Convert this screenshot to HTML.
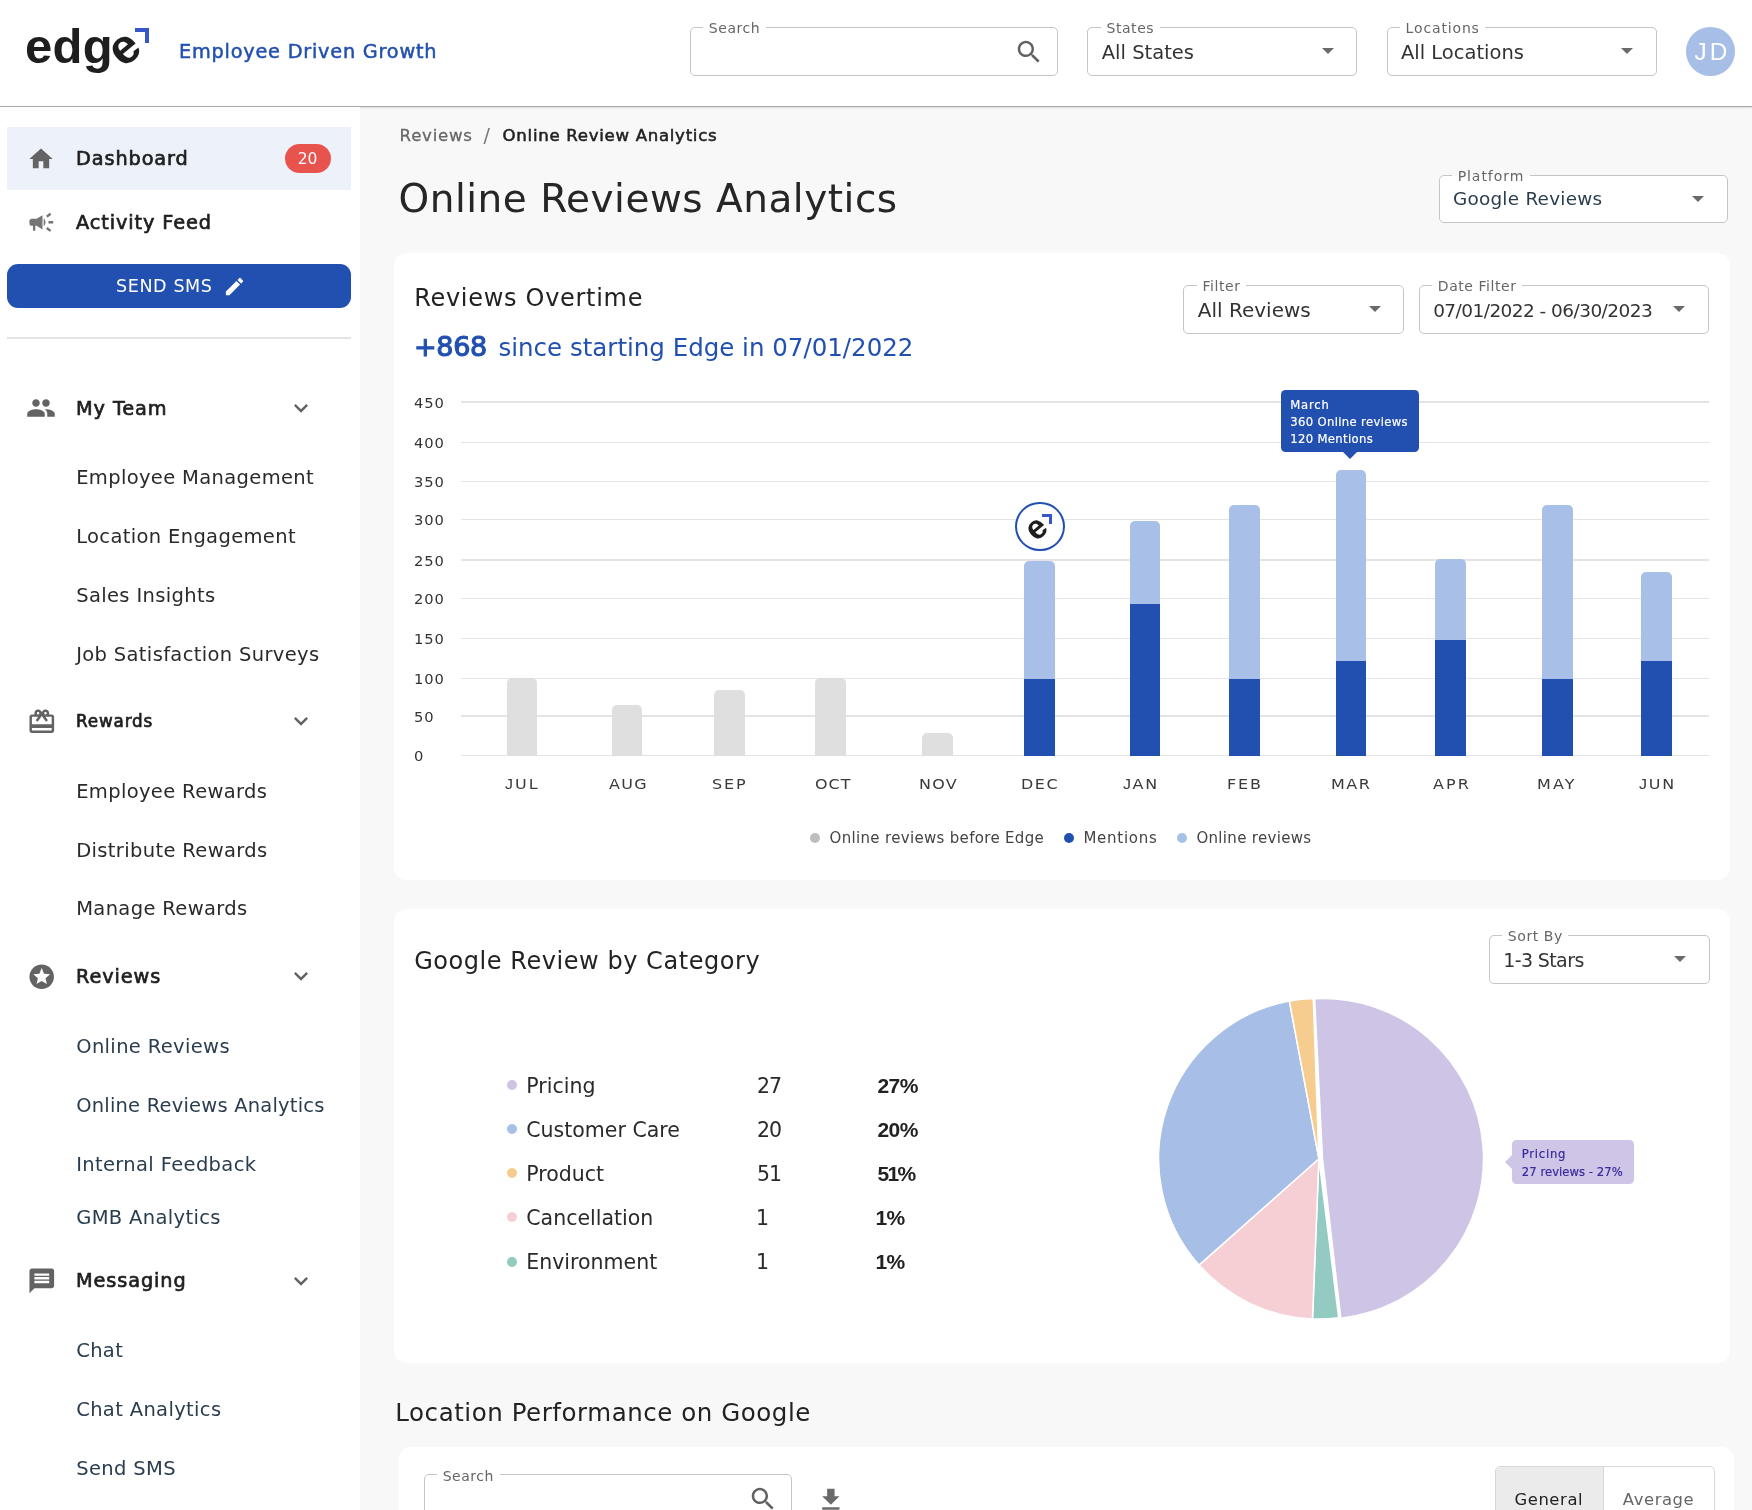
<!DOCTYPE html>
<html lang="en">
<head>
<meta charset="utf-8">
<title>Online Reviews Analytics</title>
<style>
*{box-sizing:border-box;margin:0;padding:0}
html,body{width:1752px;height:1510px;overflow:hidden;background:#f8f8f8}
body{font-family:"DejaVu Sans","Liberation Sans",sans-serif;color:#222;position:relative;-webkit-font-smoothing:antialiased}
.abs,.t,.sb,.sub{position:absolute}
.t,.sb,.sub{white-space:nowrap;line-height:1}
svg{position:absolute;display:block}
#wrap{position:absolute;left:0;top:0;width:1752px;height:1510px;will-change:transform}
#header{position:absolute;left:0;top:0;width:1752px;height:106px;background:#fff}
#hline{position:absolute;left:0;top:105.5px;width:1752px;height:1.5px;background:#a9a9a9;box-shadow:0 1px 2px rgba(0,0,0,.18)}
#sidebar{position:absolute;left:0;top:107px;width:360px;height:1403px;background:#fff}
.field{position:absolute;border:1.3px solid #c5c5c5;border-radius:5px;background:#fff}
.field .lb{position:absolute;top:-7.75px;left:12.6px;padding:0 5.5px;font-size:14px;letter-spacing:.55px;line-height:16px;color:#666;background:#fff;white-space:nowrap}
.field .val{position:absolute;left:13.4px;white-space:nowrap;color:#333;line-height:1}
.field .arr{position:absolute;width:0;height:0;border-left:6px solid transparent;border-right:6px solid transparent;border-top:6.2px solid #6a6a6a}
.sb{left:76px;font-size:19.3px;color:#1f1f1f;-webkit-text-stroke:.7px #1f1f1f;letter-spacing:.9px}
.sub{left:76.2px;font-size:19.5px;color:#2a2a2a;letter-spacing:.35px}
.sub.bl{color:#2a3d4f}
.card{position:absolute;background:#fff;border-radius:12.5px}
.gl{left:461.1px;width:1247.6px;height:1.3px;background:#e4e4e4}
.yl{left:414px;font-size:14.7px;color:#333;letter-spacing:.95px}
.bar{}.bar.g{background:#dfdfdf;border-radius:5px 5px 0 0}.bar.l{background:#a8c0e8;border-radius:5px 5px 0 0}.bar.d{background:#2250b0}
.xl{top:777.2px;font-size:14px;color:#3a3a3a;transform:scaleX(1.14);transform-origin:0 0}
.tt{font-size:11.6px;color:#fff;-webkit-text-stroke:.2px #fff;letter-spacing:.36px}
.dot{width:10px;height:10px;border-radius:50%}
.lg{font-size:15px;color:#444;letter-spacing:.32px}
.ct{font-size:20.5px;color:#2a2a2a}
.ct.b{font-family:'Liberation Sans',sans-serif;font-weight:bold;font-size:21px;letter-spacing:-.6px;color:#222}
.pt{font-size:11.6px;color:#3a2a9c;-webkit-text-stroke:.2px #3a2a9c;letter-spacing:.3px}
</style>
</head>
<body>
<div id="wrap">
<!-- HEADER -->
<div id="header">
  <div class="t" id="logo" style="left:25px;top:22px;font-family:'Liberation Sans',sans-serif;font-weight:bold;font-size:49px;letter-spacing:.3px;color:#1e1e1e">edg<span id="loge" style="display:inline-block;transform:translate(.5px,-.5px) rotate(-40deg);transform-origin:50% 62%">e</span></div>
  <div class="abs" style="left:134.5px;top:28.2px;width:14.4px;height:14.6px;border-top:4.6px solid #3756c8;border-right:4.5px solid #3756c8"></div>
  <div class="t" style="left:179px;top:42.2px;font-size:19.3px;color:#2250b0;-webkit-text-stroke:.5px #2250b0;letter-spacing:.78px">Employee Driven Growth</div>

  <div class="field" style="left:689.7px;top:27.05px;width:368.4px;height:49.2px"><span class="lb">Search</span><svg viewBox="0 0 24 24" style="left:323.4px;top:8.8px;width:30px;height:30px" fill="#616161"><path d="M15.5 14h-.79l-.28-.27C15.41 12.59 16 11.11 16 9.5 16 5.91 13.09 3 9.5 3S3 5.91 3 9.5 5.91 16 9.5 16c1.61 0 3.09-.59 4.23-1.57l.27.28v.79l5 4.99L20.49 19l-4.99-5zm-6 0C7.01 14 5 11.99 5 9.5S7.01 5 9.5 5 14 7.01 14 9.5 11.99 14 9.5 14z"/></svg></div>
  <div class="field" style="left:1087.4px;top:27.05px;width:270px;height:49.2px"><span class="lb">States</span><span class="val" style="top:15.4px;font-size:19.5px">All States</span><span class="arr" style="left:233.2px;top:20.4px"></span></div>
  <div class="field" style="left:1386.5px;top:27.05px;width:270px;height:49.2px"><span class="lb" style="letter-spacing:.85px">Locations</span><span class="val" style="top:15.4px;font-size:19.5px">All Locations</span><span class="arr" style="left:233.6px;top:20.4px"></span></div>
  <div class="abs" style="left:1686px;top:27.2px;width:49.2px;height:48.6px;border-radius:50%;background:#a7bfe6"></div>
  <div class="t" style="left:1694.5px;top:39.8px;font-family:'Liberation Sans',sans-serif;font-size:24.3px;color:#fff;letter-spacing:3px">JD</div>
</div>
<div id="hline"></div>

<!-- SIDEBAR -->
<div id="sidebar"></div>
<div class="abs" style="left:7px;top:126.7px;width:343.6px;height:63.2px;background:#edf1f9"></div>
<svg viewBox="0 0 24 24" style="left:27.3px;top:144.6px;width:28px;height:28px" fill="#636363"><path d="M10 20v-6h4v6h5v-8h3L12 3 2 12h3v8z"/></svg>
<div class="sb" style="top:149px">Dashboard</div>
<div class="abs" style="left:285.4px;top:144px;width:45.7px;height:29.3px;border-radius:15px;background:#e9534e"></div>
<div class="t" style="left:284.5px;top:151.6px;width:46px;text-align:center;font-size:15.5px;color:#fff">20</div>
<svg viewBox="0 0 24 24" style="left:26.5px;top:208.1px;width:28.6px;height:28.6px" fill="#757575"><path d="M18 11v2h4v-2h-4zm-2 6.61c.96.71 2.21 1.65 3.2 2.39.4-.53.8-1.07 1.2-1.6-.99-.74-2.24-1.68-3.2-2.4-.4.54-.8 1.08-1.2 1.61zM20.4 5.6c-.4-.53-.8-1.07-1.2-1.6-.99.74-2.24 1.68-3.2 2.4.4.53.8 1.07 1.2 1.6.96-.72 2.21-1.65 3.2-2.4zM4 9c-1.1 0-2 .9-2 2v2c0 1.1.9 2 2 2h1v4h2v-4h1l5 3V6L8 9H4zm11.5 3c0-1.33-.58-2.53-1.5-3.35v6.69c.92-.81 1.5-2.01 1.5-3.34z"/></svg>
<div class="sb" style="top:213.2px">Activity Feed</div>
<div class="abs" style="left:7px;top:264px;width:343.6px;height:44px;border-radius:11px;background:#2250b0"></div>
<div class="t" style="left:116px;top:277.9px;font-size:17.5px;color:#fff;letter-spacing:.62px">SEND SMS</div>
<svg viewBox="0 0 24 24" style="left:223px;top:275px;width:23px;height:23px" fill="#fff"><path d="M3 17.25V21h3.75L17.81 9.94l-3.75-3.75L3 17.25zM20.71 7.04c.39-.39.39-1.02 0-1.41l-2.34-2.34c-.39-.39-1.02-.39-1.41 0l-1.83 1.83 3.75 3.75 1.83-1.83z"/></svg>
<div class="abs" style="left:7px;top:337.4px;width:343.6px;height:1.5px;background:#e4e4e4"></div>
<svg viewBox="0 0 24 24" style="left:26.3px;top:392.5px;width:30px;height:30px" fill="#636363"><path d="M16 11c1.66 0 2.99-1.34 2.99-3S17.66 5 16 5c-1.66 0-3 1.34-3 3s1.34 3 3 3zm-8 0c1.66 0 2.99-1.34 2.99-3S9.66 5 8 5C6.34 5 5 6.34 5 8s1.34 3 3 3zm0 2c-2.33 0-7 1.17-7 3.5V19h14v-2.5c0-2.33-4.67-3.5-7-3.5zm8 0c-.29 0-.62.02-.97.05 1.16.84 1.97 1.97 1.97 3.45V19h6v-2.5c0-2.33-4.67-3.5-7-3.5z"/></svg>
<div class="sb" style="top:398.9px">My Team</div>
<svg viewBox="0 0 24 24" style="left:287.3px;top:393.5px;width:28px;height:28px" fill="#636363"><path d="M16.59 8.59L12 13.17 7.41 8.59 6 10l6 6 6-6z"/></svg>
<div class="sub" style="top:467.9px">Employee Management</div>
<div class="sub" style="top:526.9px">Location Engagement</div>
<div class="sub" style="top:585.9px">Sales Insights</div>
<div class="sub" style="top:644.9px">Job Satisfaction Surveys</div>
<svg viewBox="0 0 24 24" style="left:26.6px;top:706.7px;width:29.6px;height:29.6px" fill="#636363"><path d="M20 6h-2.18c.11-.31.18-.65.18-1 0-1.66-1.34-3-3-3-1.05 0-1.96.54-2.5 1.35l-.5.67-.5-.68C10.96 2.54 10.05 2 9 2 7.34 2 6 3.34 6 5c0 .35.07.69.18 1H4c-1.11 0-1.99.89-1.99 2L2 19c0 1.11.89 2 2 2h16c1.11 0 2-.89 2-2V8c0-1.11-.89-2-2-2zm-5-2c.55 0 1 .45 1 1s-.45 1-1 1-1-.45-1-1 .45-1 1-1zM9 4c.55 0 1 .45 1 1s-.45 1-1 1-1-.45-1-1 .45-1 1-1zm11 15H4v-2h16v2zm0-5H4V8h5.08L7 10.83 8.62 12 11 8.76l1-1.36 1 1.36L15.38 12 17 10.83 14.92 8H20v6z"/></svg>
<div class="sb" style="top:712.8px;font-size:16.8px;letter-spacing:.85px">Rewards</div>
<svg viewBox="0 0 24 24" style="left:287.3px;top:707.25px;width:28px;height:28px" fill="#636363"><path d="M16.59 8.59L12 13.17 7.41 8.59 6 10l6 6 6-6z"/></svg>
<div class="sub" style="top:782.1px">Employee Rewards</div>
<div class="sub" style="top:841.0px">Distribute Rewards</div>
<div class="sub" style="top:898.9px">Manage Rewards</div>
<svg viewBox="0 0 24 24" style="left:26.65px;top:962.15px;width:29.4px;height:29.4px" fill="#636363"><path d="M11.99 2C6.47 2 2 6.48 2 12s4.47 10 9.99 10C17.52 22 22 17.52 22 12S17.52 2 11.99 2zm4.24 16L12 15.45 7.77 18l1.12-4.81-3.73-3.23 4.92-.42L12 5l1.92 4.53 4.92.42-3.73 3.23L16.23 18z"/></svg>
<div class="sb" style="top:966.6px">Reviews</div>
<svg viewBox="0 0 24 24" style="left:287.3px;top:962.35px;width:28px;height:28px" fill="#636363"><path d="M16.59 8.59L12 13.17 7.41 8.59 6 10l6 6 6-6z"/></svg>
<div class="sub bl" style="top:1036.95px">Online Reviews</div>
<div class="sub bl" style="top:1096.0px;letter-spacing:.2px">Online Reviews Analytics</div>
<div class="sub bl" style="top:1154.9px">Internal Feedback</div>
<div class="sub bl" style="top:1207.7px">GMB Analytics</div>
<svg viewBox="0 0 24 24" style="left:26.6px;top:1266.1px;width:29.6px;height:29.6px" fill="#636363"><path d="M20 2H4c-1.1 0-1.99.9-1.99 2L2 22l4-4h14c1.1 0 2-.9 2-2V4c0-1.1-.9-2-2-2zm-2 12H6v-2h12v2zm0-3H6V9h12v2zm0-3H6V6h12v2z"/></svg>
<div class="sb" style="top:1270.8px">Messaging</div>
<svg viewBox="0 0 24 24" style="left:287.3px;top:1266.65px;width:28px;height:28px" fill="#636363"><path d="M16.59 8.59L12 13.17 7.41 8.59 6 10l6 6 6-6z"/></svg>
<div class="sub bl" style="top:1340.7px">Chat</div>
<div class="sub bl" style="top:1399.6px">Chat Analytics</div>
<div class="sub bl" style="top:1458.9px">Send SMS</div>

<!-- MAIN -->
<!--M1-->
<div class="t" style="left:399.6px;top:127.7px;font-size:16.6px;color:#666;-webkit-text-stroke:.3px #666;letter-spacing:.75px">Reviews</div>
<div class="t" style="left:483.5px;top:126px;font-size:19px;color:#777">/</div>
<div class="t" style="left:502.6px;top:127.7px;font-size:16.6px;color:#222;-webkit-text-stroke:.55px #222;letter-spacing:.7px">Online Review Analytics</div>
<div class="t" style="left:398.5px;top:178.9px;font-size:39px;color:#262626;letter-spacing:.5px">Online Reviews Analytics</div>
<div class="field" style="left:1438.55px;top:175px;width:289.9px;height:48.4px"><span class="lb" style="letter-spacing:.95px;background:linear-gradient(#f8f8f8 0,#f8f8f8 7.7px,#fff 7.7px)">Platform</span><span class="val" style="top:13.5px;font-size:18.4px;letter-spacing:0.25px;color:#2a3d4f">Google Reviews</span><span class="arr" style="left:252.5px;top:20.4px"></span></div>
<div class="card" style="left:394.4px;top:252.8px;width:1335.2px;height:627.2px"></div>
<div class="t" style="left:414.2px;top:285.9px;font-size:24px;color:#222;letter-spacing:.7px">Reviews Overtime</div>
<div class="t" style="left:414px;top:333.3px;font-size:27px;color:#2250b0;-webkit-text-stroke:1.1px #2250b0;letter-spacing:-.3px">+868</div>
<div class="t" style="left:498.5px;top:336.4px;font-size:24.5px;color:#2250b0">since starting Edge in 07/01/2022</div>
<div class="field" style="left:1183.4px;top:284.6px;width:221px;height:49.5px"><span class="lb">Filter</span><span class="val" style="top:14.4px;font-size:20px">All Reviews</span><span class="arr" style="left:184.3px;top:20.4px"></span></div>
<div class="field" style="left:1418.75px;top:284.6px;width:290px;height:49.5px"><span class="lb">Date Filter</span><span class="val" style="top:16.6px;font-size:18.5px;letter-spacing:-0.55px">07/01/2022 - 06/30/2023</span><span class="arr" style="left:253.2px;top:20.4px"></span></div>
<div class="abs gl" style="top:401.25px"></div>
<div class="t yl" style="top:395.55px">450</div>
<div class="abs gl" style="top:441.65px"></div>
<div class="t yl" style="top:435.95px">400</div>
<div class="abs gl" style="top:481.05px"></div>
<div class="t yl" style="top:475.35px">350</div>
<div class="abs gl" style="top:519.15px"></div>
<div class="t yl" style="top:513.45px">300</div>
<div class="abs gl" style="top:559.45px"></div>
<div class="t yl" style="top:553.75px">250</div>
<div class="abs gl" style="top:597.55px"></div>
<div class="t yl" style="top:591.85px">200</div>
<div class="abs gl" style="top:637.75px"></div>
<div class="t yl" style="top:632.05px">150</div>
<div class="abs gl" style="top:677.65px"></div>
<div class="t yl" style="top:671.95px">100</div>
<div class="abs gl" style="top:715.25px"></div>
<div class="t yl" style="top:709.55px">50</div>
<div class="abs gl" style="top:754.85px"></div>
<div class="t yl" style="top:749.15px">0</div>
<div class="abs bar g" style="left:506.5px;width:30.3px;top:678.2px;height:77.4px"></div>
<div class="abs bar g" style="left:612.2px;width:30.2px;top:704.5px;height:51.1px"></div>
<div class="abs bar g" style="left:714px;width:30.5px;top:690px;height:65.6px"></div>
<div class="abs bar g" style="left:815.4px;width:30.9px;top:678.3px;height:77.3px"></div>
<div class="abs bar g" style="left:922.3px;width:30.7px;top:733px;height:22.6px"></div>
<div class="abs bar l" style="left:1024px;width:30.8px;top:561.1px;height:194.5px"></div>
<div class="abs bar d" style="left:1024px;width:30.8px;top:678.7px;height:76.9px"></div>
<div class="abs bar l" style="left:1129.7px;width:30.6px;top:520.5px;height:235.1px"></div>
<div class="abs bar d" style="left:1129.7px;width:30.6px;top:603.8px;height:151.8px"></div>
<div class="abs bar l" style="left:1229px;width:30.8px;top:504.5px;height:251.1px"></div>
<div class="abs bar d" style="left:1229px;width:30.8px;top:678.7px;height:76.9px"></div>
<div class="abs bar l" style="left:1335.6px;width:30.8px;top:470.3px;height:285.3px"></div>
<div class="abs bar d" style="left:1335.6px;width:30.8px;top:661.4px;height:94.2px"></div>
<div class="abs bar l" style="left:1435.2px;width:30.6px;top:558.6px;height:197.0px"></div>
<div class="abs bar d" style="left:1435.2px;width:30.6px;top:639.7px;height:115.9px"></div>
<div class="abs bar l" style="left:1541.8px;width:30.8px;top:504.5px;height:251.1px"></div>
<div class="abs bar d" style="left:1541.8px;width:30.8px;top:678.7px;height:76.9px"></div>
<div class="abs bar l" style="left:1641.1px;width:30.9px;top:572.1px;height:183.5px"></div>
<div class="abs bar d" style="left:1641.1px;width:30.9px;top:661.4px;height:94.2px"></div>
<div class="t xl" style="left:505.1px;letter-spacing:1.84px"><span style="font-family:'Liberation Sans',sans-serif">J</span>UL</div>
<div class="t xl" style="left:608.9px;letter-spacing:1.17px">AUG</div>
<div class="t xl" style="left:711.9px;letter-spacing:1.66px">SEP</div>
<div class="t xl" style="left:814.8px;letter-spacing:0.91px">OCT</div>
<div class="t xl" style="left:918.5px;letter-spacing:1.10px">NOV</div>
<div class="t xl" style="left:1021.1px;letter-spacing:1.33px">DEC</div>
<div class="t xl" style="left:1123.4px;letter-spacing:1.41px"><span style="font-family:'Liberation Sans',sans-serif">J</span>AN</div>
<div class="t xl" style="left:1227.3px;letter-spacing:1.68px">FEB</div>
<div class="t xl" style="left:1330.5px;letter-spacing:1.35px">MAR</div>
<div class="t xl" style="left:1433.1px;letter-spacing:1.85px">APR</div>
<div class="t xl" style="left:1536.5px;letter-spacing:1.86px">MAY</div>
<div class="t xl" style="left:1638.8px;letter-spacing:1.55px"><span style="font-family:'Liberation Sans',sans-serif">J</span>UN</div>
<div class="abs" style="left:1280.5px;top:390px;width:138.8px;height:61.7px;border-radius:4.5px;background:#2250b0"></div>
<div class="abs" style="left:1342.7px;top:451.5px;width:0;height:0;border-left:7.2px solid transparent;border-right:7.2px solid transparent;border-top:7.4px solid #2250b0"></div>
<div class="t tt" style="left:1290.2px;top:400.1px;letter-spacing:.85px">March</div>
<div class="t tt" style="left:1290.2px;top:416.9px">360 Online reviews</div>
<div class="t tt" style="left:1290.2px;top:433.9px">120 Mentions</div>
<div class="abs" style="left:1015.3px;top:501.8px;width:49.3px;height:49.1px;border-radius:50%;border:2px solid #2250b0;background:#fff"></div>
<div class="t" id="ce" style="left:1028.7px;top:510px;font-family:'Liberation Sans',sans-serif;font-weight:bold;font-size:33.5px;color:#1e1e1e;transform:rotate(-40deg);transform-origin:50% 62%">e</div>
<div class="abs" style="left:1042.2px;top:514.3px;width:10.2px;height:9.7px;border-top:3.1px solid #3756c8;border-right:3.1px solid #3756c8"></div>
<div class="abs dot" style="left:810.4px;top:833.3px;background:#bdbdbd"></div><div class="t lg" style="left:829.6px;top:830.7px">Online reviews before Edge</div>
<div class="abs dot" style="left:1064.2px;top:833.3px;background:#2250b0"></div><div class="t lg" style="left:1083.4px;top:830.7px;letter-spacing:.75px">Mentions</div>
<div class="abs dot" style="left:1177px;top:833.3px;background:#a8c0e8"></div><div class="t lg" style="left:1196.4px;top:830.7px">Online reviews</div>
<!--/M1-->
<!--M2-->
<div class="card" style="left:394.4px;top:909.1px;width:1335.2px;height:453.6px"></div>
<div class="t" style="left:414.2px;top:948.8px;font-size:24px;color:#222;letter-spacing:.55px">Google Review by Category</div>
<div class="field" style="left:1488.75px;top:934.8px;width:221.4px;height:49.5px"><span class="lb">Sort By</span><span class="val" style="top:15.7px;font-size:19px;letter-spacing:-0.6px">1-3 Stars</span><span class="arr" style="left:184.6px;top:20.4px"></span></div>
<div class="abs dot" style="left:507.2px;top:1080.2px;background:#cfc4e6"></div>
<div class="t ct" style="left:526.3px;top:1075.6px">Pricing</div>
<div class="t ct" style="left:757px;top:1075.6px;letter-spacing:-1px">27</div>
<div class="t ct b" style="left:877.5px;top:1075.1px">27%</div>
<div class="abs dot" style="left:507.2px;top:1124.3px;background:#a8c0e8"></div>
<div class="t ct" style="left:526.3px;top:1119.7px">Customer Care</div>
<div class="t ct" style="left:757px;top:1119.7px;letter-spacing:-1px">20</div>
<div class="t ct b" style="left:877.5px;top:1119.2px">20%</div>
<div class="abs dot" style="left:507.2px;top:1168.4px;background:#f6cd8c"></div>
<div class="t ct" style="left:526.3px;top:1163.8px">Product</div>
<div class="t ct" style="left:757px;top:1163.8px;letter-spacing:-1px">51</div>
<div class="t ct b" style="left:877.5px;top:1163.3px">5<span style="margin:0 -1px 0 -1.2px">1</span>%</div>
<div class="abs dot" style="left:507.2px;top:1212.4px;background:#f6cfd4"></div>
<div class="t ct" style="left:526.3px;top:1207.8px">Cancellation</div>
<div class="t ct" style="left:756px;top:1207.8px;letter-spacing:-1px">1</div>
<div class="t ct b" style="left:877.5px;top:1207.3px"><span style="margin-left:-2px">1</span>%</div>
<div class="abs dot" style="left:507.2px;top:1256.5px;background:#93cbc0"></div>
<div class="t ct" style="left:526.3px;top:1251.9px">Environment</div>
<div class="t ct" style="left:756px;top:1251.9px;letter-spacing:-1px">1</div>
<div class="t ct b" style="left:877.5px;top:1251.4px"><span style="margin-left:-2px">1</span>%</div>
<svg width="1752" height="1510" viewBox="0 0 1752 1510" style="left:0;top:0"><path d="M1318.9 1158.7L1338.7 1317.8A160.3 160.3 0 0 1 1312.5 1318.9Z" fill="#93cac2" stroke="#fff" stroke-width="1.5" stroke-linejoin="round"/><path d="M1318.9 1158.7L1312.5 1318.9A160.3 160.3 0 0 1 1199.0 1265.1Z" fill="#f6cfd5" stroke="#fff" stroke-width="1.5" stroke-linejoin="round"/><path d="M1318.9 1158.7L1199.0 1265.1A160.3 160.3 0 0 1 1289.4 1001.1Z" fill="#a7bfe7" stroke="#fff" stroke-width="1.5" stroke-linejoin="round"/><path d="M1318.9 1158.7L1289.4 1001.1A160.3 160.3 0 0 1 1313.3 998.5Z" fill="#f6cd8e" stroke="#fff" stroke-width="1.5" stroke-linejoin="round"/><path d="M1322.5 1158.9L1314.6 998.8A160.3 160.3 0 0 1 1340.8 1318.2Z" fill="#cec4e5" stroke="#fff" stroke-width="1.5" stroke-linejoin="round"/></svg>
<div class="abs" style="left:1512.4px;top:1140px;width:121.5px;height:44px;border-radius:4.5px;background:#cfc5e6"></div>
<div class="abs" style="left:1505.2px;top:1154.9px;width:0;height:0;border-top:7.1px solid transparent;border-bottom:7.1px solid transparent;border-right:7.4px solid #cfc5e6"></div>
<div class="t pt" style="left:1521.8px;top:1148.7px;letter-spacing:.75px">Pricing</div>
<div class="t pt" style="left:1521.8px;top:1166.5px;letter-spacing:.05px">27 reviews - 27%</div>
<div class="t" style="left:395.3px;top:1400.5px;font-size:24.5px;color:#222;letter-spacing:.55px">Location Performance on Google</div>
<div class="card" style="left:398.7px;top:1447.1px;width:1335.5px;height:100px"></div>
<div class="field" style="left:423.55px;top:1474.25px;width:368.4px;height:49.2px"><span class="lb">Search</span><svg viewBox="0 0 24 24" style="left:323.4px;top:8.8px;width:30px;height:30px" fill="#616161"><path d="M15.5 14h-.79l-.28-.27C15.41 12.59 16 11.11 16 9.5 16 5.91 13.09 3 9.5 3S3 5.91 3 9.5 5.91 16 9.5 16c1.61 0 3.09-.59 4.23-1.57l.27.28v.79l5 4.99L20.49 19l-4.99-5zm-6 0C7.01 14 5 11.99 5 9.5S7.01 5 9.5 5 14 7.01 14 9.5 11.99 14 9.5 14z"/></svg></div>
<svg viewBox="0 0 24 24" style="left:816.3px;top:1484.9px;width:29.7px;height:29.7px" fill="#6a6a6a"><path d="M19 9h-4V3H9v6H5l7 7 7-7zM5 18v2h14v-2H5z"/></svg>
<div class="abs" style="left:1494.6px;top:1465.9px;width:220px;height:60px;border:1px solid #d8d8d8;border-radius:5px;background:#fff;overflow:hidden"><div class="abs" style="left:0;top:0;width:108.6px;height:60px;background:#ebebeb;border-right:1px solid #d8d8d8"></div></div>
<div class="t" style="left:1514.4px;top:1492.2px;font-size:16.4px;color:#222;letter-spacing:.6px">General</div>
<div class="t" style="left:1622.8px;top:1492.2px;font-size:16.4px;color:#666;letter-spacing:.6px">Average</div>
<!--/M2-->
</div>
</body>
</html>
